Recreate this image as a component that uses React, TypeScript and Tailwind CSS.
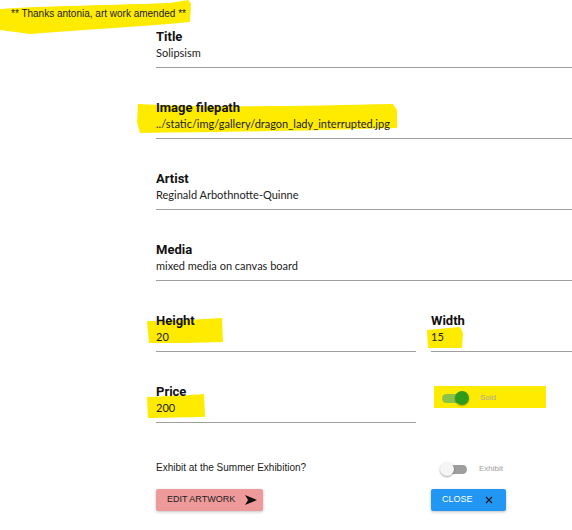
import React from "react";

const Field = ({ label, value, className = "" }: { label: string; value: string; className?: string }) => (
  <div className={`relative border-b border-[#9e9e9e] pt-[2px] pb-[6px] ${className}`}>
    <div className="relative text-[13px] leading-[16px] font-bold text-[#111] font-['Roboto',sans-serif]">{label}</div>
    <div className="relative text-[11px] leading-[16px] text-[#222] font-['Lato',sans-serif]">{value}</div>
  </div>
);

export default function App() {
  return (
    <div className="relative w-[572px] h-[530px] bg-white overflow-hidden font-['Liberation_Sans',Arial,sans-serif]">
      {/* highlighter marks */}
      <svg className="absolute left-0 top-0" width="572" height="530" viewBox="0 0 572 530">
        <path d="M0 9 C40 6 120 5 170 3 L188 0 L191 4 L190 22 C150 26 80 30 30 34 L0 30 Z" fill="#ffeb00" />
        <path d="M138 104 C200 108 300 106 393 104 L397 110 L397 128 C300 131 220 132 140 133 L137 122 Z" fill="#ffeb00" />
        <path d="M147 321 C170 321 200 319 222 318 L223 342 C200 343 170 343 149 343 Z" fill="#ffeb00" />
        <path d="M427 330 L460 327 L463 333 L462 348 L428 348 Z" fill="#ffeb00" />
        <path d="M147 397 C170 396 190 395 204 394 L205 417 C185 417 165 418 148 418 Z" fill="#ffeb00" />
        <rect x="434" y="386" width="112" height="22" fill="#ffeb00" />
      </svg>

      <div className="relative pt-[8px] pl-[11px] text-[10px] leading-[12px] text-[#222]">
        ** Thanks antonia, art work amended **
      </div>

      <div className="relative pl-[156px] pt-[7px]">
        <Field label="Title" value="Solipsism" className="mb-[30px]" />
        <Field label="Image filepath" value="../static/img/gallery/dragon_lady_interrupted.jpg" className="mb-[30px]" />
        <Field label="Artist" value="Reginald Arbothnotte-Quinne" className="mb-[30px]" />
        <Field label="Media" value="mixed media on canvas board" className="mb-[30px]" />

        <div className="grid grid-cols-[260px_141px] gap-x-[15px] mb-[30px]">
          <Field label="Height" value="20" />
          <Field label="Width" value="15" />
        </div>

        <div className="grid grid-cols-[260px_141px] gap-x-[15px]">
          <Field label="Price" value="200" />
          <div className="flex items-start pt-[9px] pl-[11px]">
            <div className="relative w-[26px] h-[14px] flex items-center">
              <div className="w-[26px] h-[9px] rounded-full bg-[#8bc34a]" />
              <div className="absolute right-[-1px] top-0 w-[14px] h-[14px] rounded-full bg-[#2e9c1a] shadow-[0_1px_2px_rgba(0,0,0,0.3)]" />
            </div>
            <span className="ml-[12px] text-[8px] leading-[14px] text-[#a8a8a8]">Sold</span>
          </div>
        </div>

        <div className="grid grid-cols-[260px_141px] gap-x-[15px] mt-[38px]">
          <div className="text-[10px] leading-[14px] text-[#222]">Exhibit at the Summer Exhibition?</div>
          <div className="flex items-start pl-[10px] pt-[1px]">
            <div className="relative w-[26px] h-[14px] flex items-center">
              <div className="w-[26px] h-[9px] rounded-full bg-[#9e9e9e]" />
              <div className="absolute left-[-1px] top-0 w-[14px] h-[14px] rounded-full bg-[#f5f5f5] shadow-[0_1px_2px_rgba(0,0,0,0.35)]" />
            </div>
            <span className="ml-[12px] text-[8px] leading-[14px] text-[#a0a0a0]">Exhibit</span>
          </div>
        </div>

        <div className="grid grid-cols-[260px_141px] gap-x-[15px] mt-[13px]">
          <div>
            <button className="h-[22px] w-[107px] flex items-center pl-[11px] gap-[10px] whitespace-nowrap rounded-[2px] bg-[#ef9a9a] text-[9px] text-[#222] shadow-[0_1px_3px_rgba(0,0,0,0.25)]">
              <span>EDIT ARTWORK</span>
              <svg width="12" height="10" viewBox="0 0 12 10">
                <path d="M0 0 L12 5 L0 10 L3 5 Z" fill="#111" />
              </svg>
            </button>
          </div>
          <div>
            <button className="h-[22px] w-[75px] flex items-center pl-[11px] gap-[12px] whitespace-nowrap rounded-[2px] bg-[#2196f3] text-[9px] text-white shadow-[0_1px_3px_rgba(0,0,0,0.25)]">
              <span>CLOSE</span>
              <svg width="8" height="8" viewBox="0 0 8 8">
                <path d="M1 1 L7 7 M7 1 L1 7" stroke="#1a1a1a" strokeWidth="1.2" />
              </svg>
            </button>
          </div>
        </div>
      </div>
    </div>
  );
}
